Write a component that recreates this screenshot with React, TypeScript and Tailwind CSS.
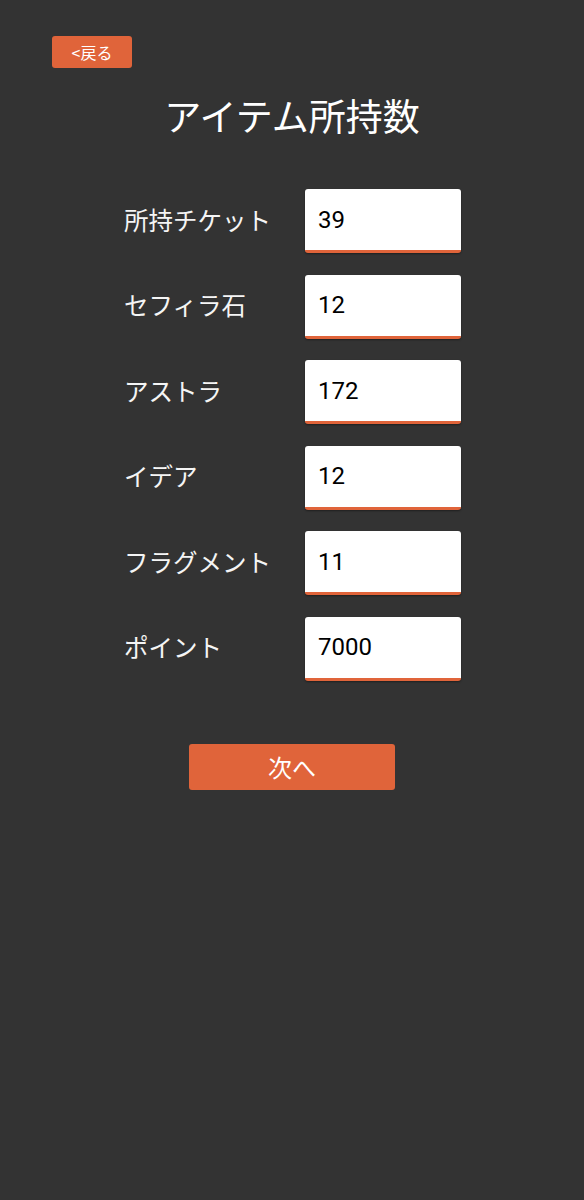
import React from "react";

const items: [string, string][] = [
  ["所持チケット", "39"],
  ["セフィラ石", "12"],
  ["アストラ", "172"],
  ["イデア", "12"],
  ["フラグメント", "11"],
  ["ポイント", "7000"],
];

export default function App() {
  return (
    <div
      className="w-[584px] h-[1200px] bg-[#333333] text-white flex flex-col"
      style={{ fontFamily: '"Noto Sans CJK JP", "Noto Sans", sans-serif' }}
    >
      <div className="pt-[36px] pl-[52px]">
        <button className="w-[80px] h-[32px] rounded-[3px] bg-[#e0643a] text-white text-[16px] leading-[32px] flex items-center justify-center">
          &lt;戻る
        </button>
      </div>
      <h1 className="mt-[23px] text-center text-[37px] leading-[48px] font-normal">
        アイテム所持数
      </h1>
      <div className="mt-[50px] flex flex-col gap-[21.6px] pl-[124px]">
        {items.map(([label, value]) => (
          <div key={label} className="flex items-center">
            <div className="w-[181px] text-[24.5px] leading-[32px] text-[#f5f5f5] -mt-[3px]">{label}</div>
            <div className="w-[156px] h-[64px] bg-white rounded-[3px] border-b-[3px] border-[#e0643a] shadow-[0_1px_2px_rgba(0,0,0,0.4)] flex items-center pl-[13px]">
              <span
                className="text-[24px] text-black leading-[30px]"
                style={{ fontFamily: 'Roboto, "Noto Sans", sans-serif' }}
              >
                {value}
              </span>
            </div>
          </div>
        ))}
      </div>
      <div className="mt-[63px] flex justify-center">
        <button className="w-[206px] h-[46px] rounded-[3px] bg-[#e0643a] text-white text-[24px] leading-[46px] flex items-center justify-center">
          次へ
        </button>
      </div>
    </div>
  );
}
